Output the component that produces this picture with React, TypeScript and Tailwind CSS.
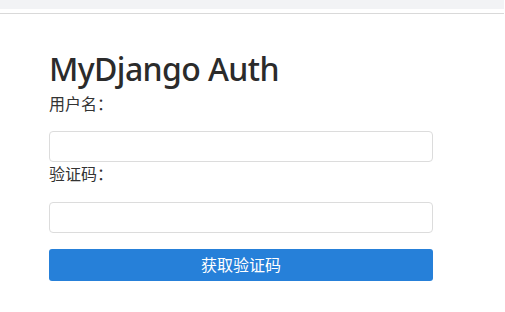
import React from 'react';

const App: React.FC = () => {
  return (
    <div
      className="min-h-screen w-[505px] bg-white text-[#333]"
      style={{ fontFamily: '"Noto Sans", "Noto Sans CJK SC", sans-serif' }}
    >
      <div className="h-[9px] w-[504px] bg-[#f2f3f5]" />
      <div className="mt-[4px] h-px w-[504px] bg-[#d9d9d9]" />
      <div className="px-[49px] pt-[36px] w-[384px] box-content">
        <h1 className="mb-[4px] text-[32px] leading-[38px] font-medium tracking-[-0.6px] text-[#2b2b2b]">
          MyDjango Auth
        </h1>
        <form className="flex flex-col" onSubmit={(e) => e.preventDefault()}>
          <label className="text-[16px] leading-[24px]">用户名：</label>
          <input
            type="text"
            className="mt-[15px] h-[31px] w-[384px] rounded border border-[#dcdcdc] bg-white"
          />
          <label className="text-[16px] leading-[24px]">验证码：</label>
          <input
            type="text"
            className="mt-[16px] h-[31px] w-[384px] rounded border border-[#dcdcdc] bg-white"
          />
          <button
            type="submit"
            className="mt-[16px] h-[32px] w-[384px] rounded-[3px] bg-[#2680d9] text-white text-[16px]"
          >
            获取验证码
          </button>
        </form>
      </div>
    </div>
  );
};

export default App;
